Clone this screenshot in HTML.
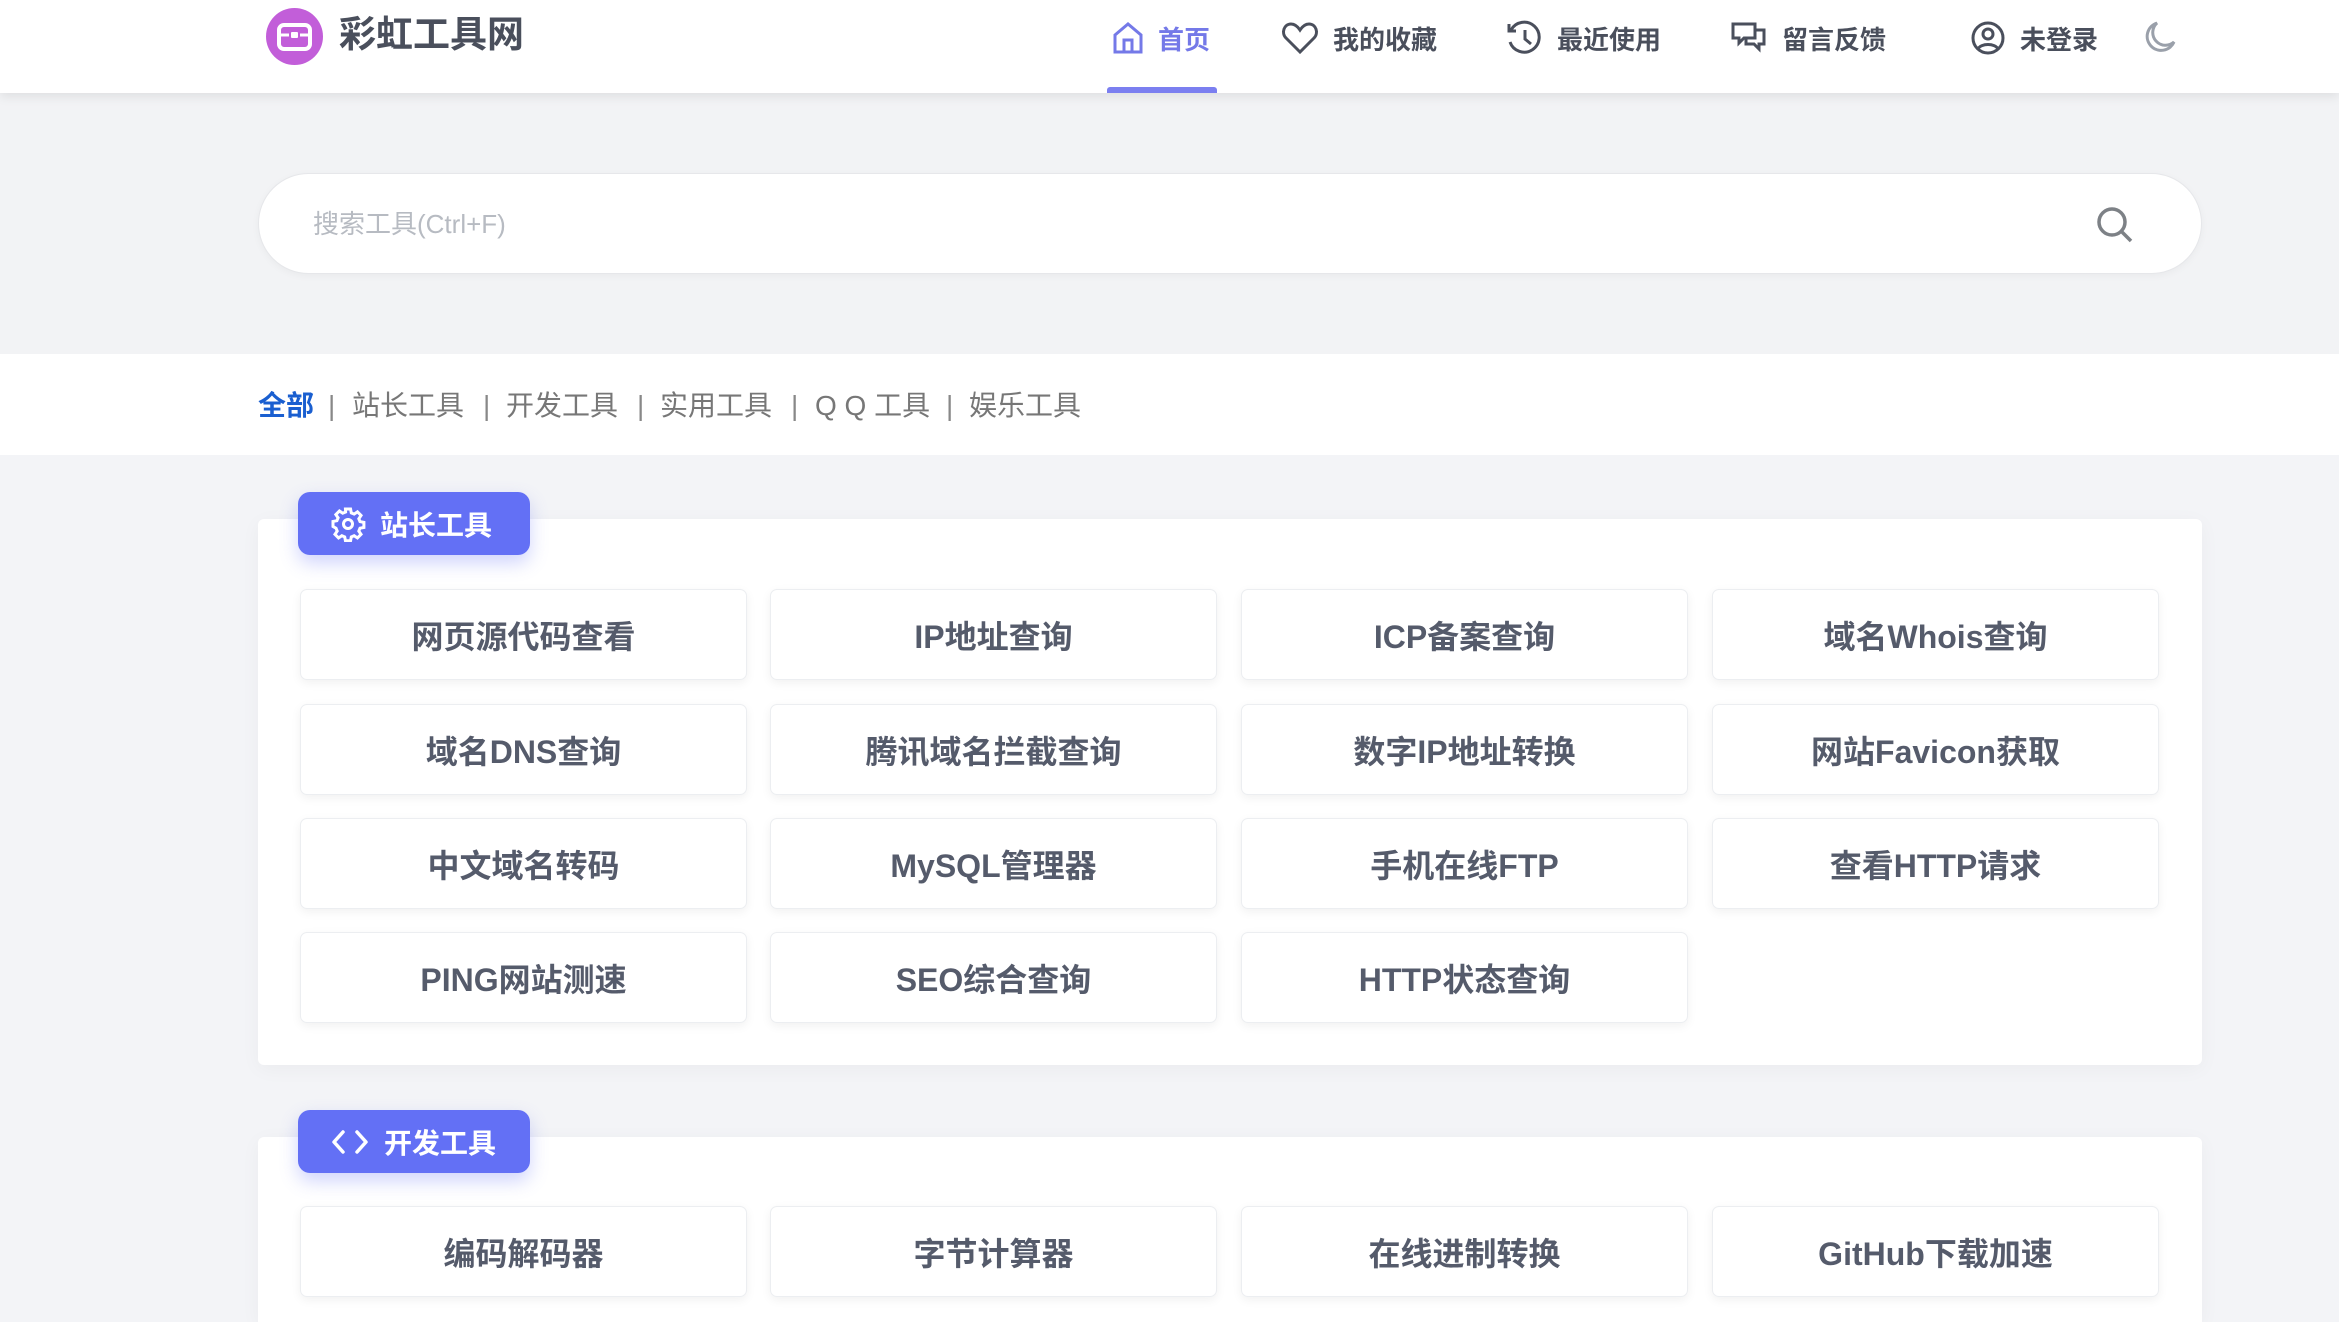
<!DOCTYPE html>
<html><head><meta charset="utf-8"><style>
*{margin:0;padding:0;box-sizing:border-box}
html,body{width:2339px;height:1322px;overflow:hidden}
body{background:#f3f4f7;font-family:"Liberation Sans","Noto Sans CJK SC",sans-serif}
#wrap{position:relative;width:2339px;height:1322px;overflow:hidden}
.abs{position:absolute}
#hdr{left:0;top:0;width:2339px;height:93px;background:#fff;box-shadow:0 4px 10px rgba(0,0,0,.08);z-index:5}
.nav{position:absolute;top:20px;height:36px;display:flex;align-items:center;font-size:26px;font-weight:bold;color:#4a4f5c}
.nav svg{margin-right:14px}
#band{left:0;top:93px;width:2339px;height:261px;background:#f2f3f5}
#search{left:258px;top:173px;width:1944px;height:101px;border-radius:51px;background:#fff;border:1px solid #e6e7ea;box-shadow:0 2px 8px rgba(0,0,0,.04)}
#cat{left:0;top:354px;width:2339px;height:101px;background:#fff}
#cat span{position:absolute;top:36px;font-size:28px;color:#777;line-height:32px}
.panel{position:absolute;left:258px;width:1944px;background:#fff;border-radius:6px;box-shadow:0 4px 20px rgba(0,0,0,.04)}
.badge{position:absolute;left:298px;width:232px;height:63px;background:#6370f5;border-radius:12px;box-shadow:0 8px 18px rgba(99,112,245,.3);color:#fff;font-size:28px;font-weight:bold;display:flex;align-items:center;padding-left:32px}
.badge svg{margin-right:14px}
.btn{position:absolute;width:447px;height:91px;background:#fff;border:1px solid #eceef1;border-radius:7px;box-shadow:0 3px 10px rgba(0,0,0,.06);display:flex;align-items:center;justify-content:center;font-size:32px;font-weight:bold;color:#555b6b}
</style></head><body><div id="wrap">
<div id="hdr" class="abs">
 <div class="abs" style="left:266px;top:8px;width:57px;height:57px;border-radius:50%;background:#c25ed9"></div>
 <svg class="abs" style="left:276px;top:20px" width="37" height="33" viewBox="0 0 37 33"><rect x="3" y="5" width="31" height="24" rx="5" fill="none" stroke="#fff" stroke-width="4"/><line x1="3" y1="15" x2="34" y2="15" stroke="#fff" stroke-width="3"/><rect x="14" y="11" width="9" height="8" rx="2" fill="#fff" stroke="#c25ed9" stroke-width="2"/></svg>
 <div class="abs" style="left:339px;top:13px;font-size:37px;font-weight:bold;color:#4a4f5c;line-height:44px">彩虹工具网</div>
 <div class="nav" style="left:1112px;color:#7479e8"><svg width="32" height="34" viewBox="0 0 32 34" fill="none" stroke="#7479e8" stroke-width="3"><path d="M3 14L16 3l13 11v17H3z"/><path d="M12 31V19h8v12"/></svg>首页</div>
 <div class="abs" style="left:1107px;top:87px;width:110px;height:6px;background:#7b7ff0;border-radius:3px 3px 0 0"></div>
 <div class="nav" style="left:1281px"><svg width="38" height="34" viewBox="0 0 38 34" fill="none" stroke="#4a4f5c" stroke-width="3"><path d="M19 31L5 17C0 12 3 3 10 3c4 0 7 3 9 6 2-3 5-6 9-6 7 0 10 9 5 14z"/></svg>我的收藏</div>
 <div class="nav" style="left:1505px"><svg width="38" height="36" viewBox="0 0 38 36" fill="none" stroke="#4a4f5c" stroke-width="3"><path d="M6 10a15 15 0 1 1-1 12"/><path d="M4 4v7h7"/><path d="M20 10v9l6 5"/></svg>最近使用</div>
 <div class="nav" style="left:1730px"><svg width="38" height="36" viewBox="0 0 38 36" fill="none" stroke="#4a4f5c" stroke-width="3"><path d="M3 4h22v14H14l-5 5v-5H3z"/><path d="M25 10h9v14h-5v5l-5-5h-8v-6"/></svg>留言反馈</div>
 <div class="nav" style="left:1970px"><svg width="36" height="36" viewBox="0 0 36 36" fill="none" stroke="#4a4f5c" stroke-width="3"><circle cx="18" cy="18" r="15"/><circle cx="18" cy="14" r="5"/><path d="M8 29c3-6 17-6 20 0"/></svg>未登录</div>
 <svg class="abs" style="left:2145px;top:20px" width="32" height="34" viewBox="0 0 32 34" fill="none" stroke="#9aa0aa" stroke-width="3"><path d="M12 3a14 14 0 1 0 17 19A12 12 0 0 1 12 3z"/></svg>
</div>
<div id="band" class="abs"></div>
<div id="search" class="abs">
 <div class="abs" style="left:54px;top:33px;font-size:26px;color:#b7bbc2;line-height:34px">搜索工具(Ctrl+F)</div>
 <svg class="abs" style="left:1836px;top:31px" width="40" height="40" viewBox="0 0 40 40" fill="none" stroke="#7d8186" stroke-width="3.5"><circle cx="17" cy="17" r="13"/><path d="M27 27l9 9"/></svg>
</div>
<div id="cat" class="abs">
 <span style="left:258px;color:#1a5fd0;font-weight:bold">全部</span>
 <span style="left:328px;color:#888">|</span>
 <span style="left:352px">站长工具</span>
 <span style="left:483px;color:#888">|</span>
 <span style="left:506px">开发工具</span>
 <span style="left:637px;color:#888">|</span>
 <span style="left:660px">实用工具</span>
 <span style="left:791px;color:#888">|</span>
 <span style="left:815px">Q Q 工具</span>
 <span style="left:946px;color:#888">|</span>
 <span style="left:969px">娱乐工具</span>
</div>
<div class="panel" style="top:519px;height:546px"></div>
<div class="badge" style="top:492px"><svg width="36" height="36" viewBox="0 0 24 24" fill="none" stroke="#fff" stroke-width="2"><circle cx="12" cy="12" r="3"/><path d="M10.3 2h3.4l.5 2.6 1.9.8 2.2-1.5 2.4 2.4-1.5 2.2.8 1.9 2.6.5v3.4l-2.6.5-.8 1.9 1.5 2.2-2.4 2.4-2.2-1.5-1.9.8-.5 2.6h-3.4l-.5-2.6-1.9-.8-2.2 1.5-2.4-2.4 1.5-2.2-.8-1.9L2 13.7v-3.4l2.6-.5.8-1.9-1.5-2.2 2.4-2.4 2.2 1.5 1.9-.8z"/></svg>站长工具</div>
<div class="btn" style="left:300px;top:589px">网页源代码查看</div>
<div class="btn" style="left:770px;top:589px">IP地址查询</div>
<div class="btn" style="left:1241px;top:589px">ICP备案查询</div>
<div class="btn" style="left:1712px;top:589px">域名Whois查询</div>
<div class="btn" style="left:300px;top:704px">域名DNS查询</div>
<div class="btn" style="left:770px;top:704px">腾讯域名拦截查询</div>
<div class="btn" style="left:1241px;top:704px">数字IP地址转换</div>
<div class="btn" style="left:1712px;top:704px">网站Favicon获取</div>
<div class="btn" style="left:300px;top:818px">中文域名转码</div>
<div class="btn" style="left:770px;top:818px">MySQL管理器</div>
<div class="btn" style="left:1241px;top:818px">手机在线FTP</div>
<div class="btn" style="left:1712px;top:818px">查看HTTP请求</div>
<div class="btn" style="left:300px;top:932px">PING网站测速</div>
<div class="btn" style="left:770px;top:932px">SEO综合查询</div>
<div class="btn" style="left:1241px;top:932px">HTTP状态查询</div>
<div class="panel" style="top:1137px;height:185px;border-radius:6px 6px 0 0"></div>
<div class="badge" style="top:1110px"><svg width="40" height="30" viewBox="0 0 40 30" fill="none" stroke="#fff" stroke-width="3.5" stroke-linecap="round" stroke-linejoin="round"><path d="M13 5L4 15l9 10"/><path d="M27 5l9 10-9 10"/></svg>开发工具</div>
<div class="btn" style="left:300px;top:1206px">编码解码器</div>
<div class="btn" style="left:770px;top:1206px">字节计算器</div>
<div class="btn" style="left:1241px;top:1206px">在线进制转换</div>
<div class="btn" style="left:1712px;top:1206px">GitHub下载加速</div>
</div></body></html>
